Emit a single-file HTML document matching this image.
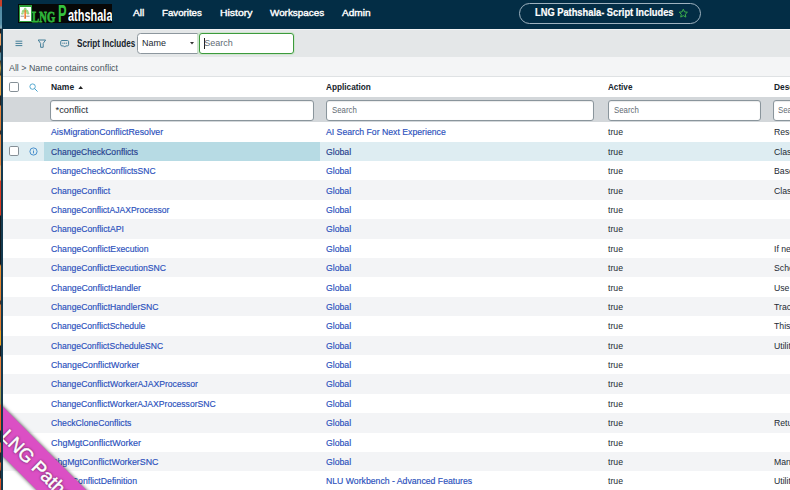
<!DOCTYPE html><html><head><meta charset="utf-8"><title>LNG Pathshala- Script Includes</title><style>
*{box-sizing:border-box;margin:0;padding:0}
html,body{width:790px;height:490px;overflow:hidden;background:#fff}
body{font-family:"Liberation Sans",sans-serif;font-size:8.7px;color:#1d2a33;position:relative}
.abs{position:absolute}
#strip{left:0;top:0;width:1.5px;height:490px;background:linear-gradient(to bottom,#c8402a 0px,#c8402a 6px,#4f8aa3 7px,#5b93ab 24px,#8ab0c0 28px,#1a1a1c 29.5px,#1a1a1c 33px,#f0a868 34px,#eea060 45px,#2a2622 46px,#2a2622 52px,#5a8a9a 53px,#5a8a9a 60px,#3a3020 61px,#c8a040 68px,#3a3020 75px,#e8a040 76px,#e8a040 95px,#2a2420 96px,#2a2420 105px,#e8853c 106px,#d87a34 130px,#3a2a20 131px,#3a2a20 134px,#e8853c 135px,#e8853c 165px,#f0b070 166px,#f0b070 180px,#d83820 181px,#d83820 215px,#15181c 216px,#15181c 264px,#e89030 266px,#e07c30 300px,#4a3020 301px,#4a3020 304px,#e07c30 305px,#e07c30 330px,#f0a020 331px,#f0a020 345px,#1a1a1c 346px,#1a1a1c 356px,#e8803c 357px,#e8803c 386px,#a89a50 387px,#a89a50 404px,#f05a20 405px,#f05a20 430px,#2a2020 431px,#2a2020 442px,#e86030 443px,#e86030 452px,#2a2020 453px,#3a2420 462px,#e8602c 463px,#c04a24 470px,#2a2020 471px,#2a2020 478px,#e85a28 479px,#d04820 490px)}
#sline{left:1.4px;top:29.3px;width:1.5px;height:461px;background:#143a50}
#strip2{left:0;top:400px;width:1.5px;height:90px;background:linear-gradient(to bottom,#c8402a 0px,#c8402a 6px,#4f8aa3 7px,#5b93ab 24px,#8ab0c0 28px,#1a1a1c 29.5px,#1a1a1c 33px,#f0a868 34px,#eea060 45px,#2a2622 46px,#2a2622 52px,#5a8a9a 53px,#5a8a9a 60px,#3a3020 61px,#c8a040 68px,#3a3020 75px,#e8a040 76px,#e8a040 95px,#2a2420 96px,#2a2420 105px,#e8853c 106px,#d87a34 130px,#3a2a20 131px,#3a2a20 134px,#e8853c 135px,#e8853c 165px,#f0b070 166px,#f0b070 180px,#d83820 181px,#d83820 215px,#15181c 216px,#15181c 264px,#e89030 266px,#e07c30 300px,#4a3020 301px,#4a3020 304px,#e07c30 305px,#e07c30 330px,#f0a020 331px,#f0a020 345px,#1a1a1c 346px,#1a1a1c 356px,#e8803c 357px,#e8803c 386px,#a89a50 387px,#a89a50 404px,#f05a20 405px,#f05a20 430px,#2a2020 431px,#2a2020 442px,#e86030 443px,#e86030 452px,#2a2020 453px,#3a2420 462px,#e8602c 463px,#c04a24 470px,#2a2020 471px,#2a2020 478px,#e85a28 479px,#d04820 490px);background-size:2.2px 490px;background-position:0 -400px}
#sline2{left:1.4px;top:400px;width:1.5px;height:90px;background:#143a50}
#hdr{left:1.5px;top:0;width:788.5px;height:29.3px;background:#032d45}
#hline{left:3px;top:29.3px;width:787px;height:.8px;background:#f2f4f5}
#tool{left:3px;top:30.1px;width:787px;height:27.3px;background:#e4e7e8}
#crumb{left:3px;top:57.4px;width:787px;height:19px;background:#f4f5f6}
#thead{left:3px;top:76.3px;width:787px;height:21px;background:#fff;border-top:1px solid #dfe2e4}
#filt{left:3px;top:97.3px;width:787px;height:25px;background:#d3d7da}
.nav{color:#fff;font-size:9.9px;top:7.05px;white-space:nowrap;line-height:12px;transform-origin:0 50%;-webkit-text-stroke:0.4px #fff}
.row{left:3px;width:787px;height:19.39px}
.row.g{background:#f3f4f6}
.row.h{background:#deedf2}
.cell{position:absolute;white-space:nowrap;line-height:19.39px;height:19.39px;top:1.1px}
.lnk{color:#2a50bc;-webkit-text-stroke:.15px #2a50bc}
.h .lnk{color:#26408e;-webkit-text-stroke:.15px #26408e}
.b{font-weight:bold}
.inp{position:absolute;background:#fff;border:1px solid #8a959c;border-radius:3px;height:20.8px;top:2.5px;font-size:9.3px;line-height:19px;padding-left:4.6px;color:#5a666e;white-space:nowrap;overflow:hidden;box-shadow:inset 0 0.5px 1px rgba(0,0,0,.15)}
.cb{position:absolute;width:10.6px;height:10.6px;border:1px solid #858f96;border-radius:1.8px;background:#fff}
</style></head><body>
<div id="strip" class="abs"></div><div id="sline" class="abs"></div>
<div id="hdr" class="abs"></div><div id="hline" class="abs"></div>
<div class="abs" style="left:17.9px;top:4.1px;width:94.2px;height:19.1px;background:#070707;overflow:hidden">
<div class="abs" style="left:1.4px;top:1.1px;width:12.9px;height:16.9px;border:1.3px solid #2f9e3a;border-top-width:2px;background:#fff">
<svg class="abs" style="left:0;top:0" width="10.3" height="13.6" viewBox="0 0 103 136"><g fill="#9bd884"><circle cx="52" cy="22" r="14"/><circle cx="34" cy="42" r="15"/><circle cx="70" cy="42" r="15"/><circle cx="24" cy="64" r="12"/><circle cx="80" cy="62" r="12"/><circle cx="52" cy="40" r="16"/></g><path d="M46 30h12l3 88H43z" fill="#f07a2a"/><path d="M40 62l10 14M66 58L56 74" stroke="#f39a4a" stroke-width="6"/><rect x="6" y="88" width="34" height="7" fill="#666"/><rect x="62" y="88" width="34" height="7" fill="#666"/></svg>
</div>
<span class="abs" style="left:14.6px;top:4.6px;font-family:'Liberation Serif',serif;font-weight:bold;font-size:15.4px;line-height:15px;color:#2fb53a;transform:scaleX(.685);transform-origin:0 0;letter-spacing:.3px;-webkit-text-stroke:.8px #2fb53a">LNG</span>
<span class="abs" style="left:40.2px;top:-2.15px;font-weight:bold;font-size:23px;line-height:24px;color:#35c13f;transform:scaleX(.56);transform-origin:0 0">P</span>
<span class="abs" style="left:50.2px;top:4.1px;font-weight:bold;font-size:15.9px;line-height:16px;color:#fff;transform:scaleX(.69);transform-origin:0 0">athshala</span>
</div>
<span class="abs nav" id="nav0" style="transform:scaleX(1.0378);left:133px">All</span>
<span class="abs nav" id="nav1" style="transform:scaleX(0.9801);left:162.2px">Favorites</span>
<span class="abs nav" id="nav2" style="transform:scaleX(1.0574);left:219.8px">History</span>
<span class="abs nav" id="nav3" style="transform:scaleX(0.9990);left:270.3px">Workspaces</span>
<span class="abs nav" id="nav4" style="transform:scaleX(1.0214);left:341.9px">Admin</span>
<div class="abs" style="left:519.3px;top:3.2px;width:182px;height:20.6px;border:1px solid #9fb3c0;border-radius:11px"></div>
<span class="abs b" id="ptitle" style="transform:scaleX(0.9129);left:535.3px;top:7px;color:#fff;-webkit-text-stroke:.2px #fff;font-size:10.2px;line-height:12px;white-space:nowrap;transform-origin:0 50%">LNG Pathshala- Script Includes</span>
<svg class="abs" style="left:678.2px;top:8.2px" width="10.6" height="10.6" viewBox="0 0 24 24"><path d="M12 2.8l2.8 6 6.5.8-4.8 4.5 1.3 6.5L12 17.3l-5.8 3.3 1.3-6.5L2.7 9.6l6.5-.8z" fill="none" stroke="#3fb54a" stroke-width="2.2" stroke-linejoin="round"/></svg>
<div id="tool" class="abs"></div>
<svg class="abs" style="left:0;top:30px" width="80" height="28" viewBox="0 30 80 28"><g fill="none" stroke="#447f99">
<path d="M15.5 41.2h6.8M15.5 43.4h6.8M15.5 45.6h6.8" stroke-width="1"/>
<path d="M38.2 40h7.4L43.2 43.4v3.9h-2.6v-3.9z" stroke-width="1" stroke-linejoin="round"/>
<path d="M61.9 40.5h5.5a1.2 1.2 0 0 1 1.2 1.2v3a1.2 1.2 0 0 1-1.2 1.2h-1.7l-1.05 1.2-1.05-1.2h-1.7a1.2 1.2 0 0 1-1.2-1.2v-3a1.2 1.2 0 0 1 1.2-1.2z" stroke-width="1"/></g>
<g fill="#447f99"><circle cx="62.9" cy="43.2" r=".6"/><circle cx="64.65" cy="43.2" r=".6"/><circle cx="66.4" cy="43.2" r=".6"/></g></svg>
<span class="abs b" id="stitle" style="transform:scaleX(0.8057);left:77.3px;top:37.5px;font-size:10.1px;line-height:12px;color:#16232b;white-space:nowrap;transform-origin:0 50%">Script Includes</span>
<div class="abs" style="left:137.4px;top:33.2px;width:61px;height:20.4px;background:#fff;border:1px solid #8d979e;border-radius:3.5px 0 0 3.5px"></div>
<span class="abs" style="left:142px;top:37.4px;font-size:9px;line-height:12px;color:#1d2a33">Name</span>
<svg class="abs" style="left:189.6px;top:42px" width="4" height="3" viewBox="0 0 4 3"><path d="M0 0h4L2 2.6z" fill="#333"/></svg>
<div class="abs" style="left:197.4px;top:32.2px;width:98px;height:22.4px;border-radius:4px;background:#cfe5cf"></div>
<div class="abs" style="left:198.6px;top:33.2px;width:95.6px;height:20.4px;background:#fff;border:1.2px solid #3c9a3c;border-radius:3px"></div>
<div class="abs" style="left:203.6px;top:38px;width:.8px;height:11px;background:#222"></div>
<span class="abs" style="left:204.2px;top:37.4px;font-size:9px;line-height:12px;color:#5f6b73">Search</span>
<div id="crumb" class="abs"></div>
<span class="abs" id="crumbt" style="transform:scaleX(0.9976);left:9px;top:61.5px;font-size:8.9px;line-height:12px;color:#4a565e;white-space:nowrap;transform-origin:0 50%">All &gt; Name contains conflict</span>
<div id="thead" class="abs"></div>
<div class="cb" style="left:8.8px;top:81.8px"></div>
<svg class="abs" style="left:28.6px;top:82.6px" width="9" height="9" viewBox="0 0 9 9"><circle cx="3.6" cy="3.6" r="2.7" fill="none" stroke="#46a0cc" stroke-width=".9"/><path d="M5.6 5.6L8.3 8.3" stroke="#46a0cc" stroke-width="1" stroke-linecap="round"/></svg>
<span class="abs b" id="h0" style="transform:scaleX(0.8837);left:50.9px;top:80.95px;font-size:9.6px;line-height:12px;color:#16232b;white-space:nowrap;transform-origin:0 50%">Name</span>
<span class="abs b" id="h1" style="transform:scaleX(0.8596);left:326px;top:80.95px;font-size:9.6px;line-height:12px;color:#16232b;white-space:nowrap;transform-origin:0 50%">Application</span>
<span class="abs b" id="h2" style="transform:scaleX(0.8473);left:608.2px;top:80.95px;font-size:9.6px;line-height:12px;color:#16232b;white-space:nowrap;transform-origin:0 50%">Active</span>
<span class="abs b" id="h3" style="transform:scaleX(0.8715);left:774px;top:80.95px;font-size:9.6px;line-height:12px;color:#16232b;white-space:nowrap;transform-origin:0 50%">Description</span>
<svg class="abs" style="left:77.8px;top:85.8px" width="5.4" height="3.6" viewBox="0 0 5.4 3.6"><path d="M0 3.4h5.4L2.7 0z" fill="#222"/></svg>
<div id="filt" class="abs">
<div class="inp" style="left:47px;width:263.6px;color:#1d2a33">*conflict</div>
<div class="inp" style="left:323px;width:268.4px;color:#5f6b73;font-size:8.8px"><span id="ph326" style="transform:scaleX(0.8897);display:inline-block;transform-origin:0 50%">Search</span></div>
<div class="inp" style="left:605px;width:153.4px;color:#5f6b73;font-size:8.8px"><span id="ph608" style="transform:scaleX(0.8897);display:inline-block;transform-origin:0 50%">Search</span></div>
<div class="inp" style="left:769.8px;width:60px;color:#5f6b73;font-size:8.8px"><span id="ph772" style="transform:scaleX(0.8897);display:inline-block;transform-origin:0 50%">Search</span></div>
</div>
<div class="row abs" style="top:122.30px">
<span class="cell lnk" id="n0" style="transform:scaleX(1.0095);transform-origin:0 50%;left:47.8px">AisMigrationConflictResolver</span>
<span class="cell lnk" id="a0" style="left:323px">AI Search For Next Experience</span>
<span class="cell" style="left:605px">true</span>
<span class="cell" style="left:771px">Resolves</span>
</div>
<div class="row abs h" style="top:141.69px">
<div class="abs" style="left:41.4px;top:0;width:275.6px;height:19.39px;background:#b7dbe4"></div>
<div class="cb" style="left:5.8px;top:4.2px"></div>
<svg class="abs" style="left:25.6px;top:5.2px" width="9" height="9" viewBox="0 0 9 9"><circle cx="4.5" cy="4.5" r="3.6" fill="none" stroke="#3a86c8" stroke-width=".9"/><path d="M4.5 4v2.4" stroke="#3a86c8" stroke-width=".9"/><circle cx="4.5" cy="2.9" r=".5" fill="#3a86c8"/></svg>
<span class="cell lnk" id="n1" style="transform:scaleX(0.9844);transform-origin:0 50%;left:47.8px">ChangeCheckConflicts</span>
<span class="cell lnk" id="a1" style="left:323px">Global</span>
<span class="cell" style="left:605px">true</span>
<span class="cell" style="left:771px">Class</span>
</div>
<div class="row abs" style="top:161.08px">
<span class="cell lnk" id="n2" style="transform:scaleX(0.9801);transform-origin:0 50%;left:47.8px">ChangeCheckConflictsSNC</span>
<span class="cell lnk" id="a2" style="left:323px">Global</span>
<span class="cell" style="left:605px">true</span>
<span class="cell" style="left:771px">Base</span>
</div>
<div class="row abs g" style="top:180.47px">
<span class="cell lnk" id="n3" style="transform:scaleX(0.9948);transform-origin:0 50%;left:47.8px">ChangeConflict</span>
<span class="cell lnk" id="a3" style="left:323px">Global</span>
<span class="cell" style="left:605px">true</span>
<span class="cell" style="left:771px">Class</span>
</div>
<div class="row abs" style="top:199.86px">
<span class="cell lnk" id="n4" style="transform:scaleX(0.9847);transform-origin:0 50%;left:47.8px">ChangeConflictAJAXProcessor</span>
<span class="cell lnk" id="a4" style="left:323px">Global</span>
<span class="cell" style="left:605px">true</span>
</div>
<div class="row abs g" style="top:219.25px">
<span class="cell lnk" id="n5" style="transform:scaleX(0.9917);transform-origin:0 50%;left:47.8px">ChangeConflictAPI</span>
<span class="cell lnk" id="a5" style="left:323px">Global</span>
<span class="cell" style="left:605px">true</span>
</div>
<div class="row abs" style="top:238.64px">
<span class="cell lnk" id="n6" style="transform:scaleX(0.9994);transform-origin:0 50%;left:47.8px">ChangeConflictExecution</span>
<span class="cell lnk" id="a6" style="left:323px">Global</span>
<span class="cell" style="left:605px">true</span>
<span class="cell" style="left:771px">If needed</span>
</div>
<div class="row abs g" style="top:258.03px">
<span class="cell lnk" id="n7" style="transform:scaleX(0.9922);transform-origin:0 50%;left:47.8px">ChangeConflictExecutionSNC</span>
<span class="cell lnk" id="a7" style="left:323px">Global</span>
<span class="cell" style="left:605px">true</span>
<span class="cell" style="left:771px">Schedule</span>
</div>
<div class="row abs" style="top:277.42px">
<span class="cell lnk" id="n8" style="transform:scaleX(1.0019);transform-origin:0 50%;left:47.8px">ChangeConflictHandler</span>
<span class="cell lnk" id="a8" style="left:323px">Global</span>
<span class="cell" style="left:605px">true</span>
<span class="cell" style="left:771px">Use this</span>
</div>
<div class="row abs g" style="top:296.81px">
<span class="cell lnk" id="n9" style="transform:scaleX(0.9938);transform-origin:0 50%;left:47.8px">ChangeConflictHandlerSNC</span>
<span class="cell lnk" id="a9" style="left:323px">Global</span>
<span class="cell" style="left:605px">true</span>
<span class="cell" style="left:771px">Track</span>
</div>
<div class="row abs" style="top:316.20px">
<span class="cell lnk" id="n10" style="transform:scaleX(0.9870);transform-origin:0 50%;left:47.8px">ChangeConflictSchedule</span>
<span class="cell lnk" id="a10" style="left:323px">Global</span>
<span class="cell" style="left:605px">true</span>
<span class="cell" style="left:771px">This</span>
</div>
<div class="row abs g" style="top:335.59px">
<span class="cell lnk" id="n11" style="transform:scaleX(0.9836);transform-origin:0 50%;left:47.8px">ChangeConflictScheduleSNC</span>
<span class="cell lnk" id="a11" style="left:323px">Global</span>
<span class="cell" style="left:605px">true</span>
<span class="cell" style="left:771px">Utility</span>
</div>
<div class="row abs" style="top:354.98px">
<span class="cell lnk" id="n12" style="transform:scaleX(1.0109);transform-origin:0 50%;left:47.8px">ChangeConflictWorker</span>
<span class="cell lnk" id="a12" style="left:323px">Global</span>
<span class="cell" style="left:605px">true</span>
</div>
<div class="row abs g" style="top:374.37px">
<span class="cell lnk" id="n13" style="transform:scaleX(0.9927);transform-origin:0 50%;left:47.8px">ChangeConflictWorkerAJAXProcessor</span>
<span class="cell lnk" id="a13" style="left:323px">Global</span>
<span class="cell" style="left:605px">true</span>
</div>
<div class="row abs" style="top:393.76px">
<span class="cell lnk" id="n14" style="transform:scaleX(0.9897);transform-origin:0 50%;left:47.8px">ChangeConflictWorkerAJAXProcessorSNC</span>
<span class="cell lnk" id="a14" style="left:323px">Global</span>
<span class="cell" style="left:605px">true</span>
</div>
<div class="row abs g" style="top:413.15px">
<span class="cell lnk" id="n15" style="transform:scaleX(0.9970);transform-origin:0 50%;left:47.8px">CheckCloneConflicts</span>
<span class="cell lnk" id="a15" style="left:323px">Global</span>
<span class="cell" style="left:605px">true</span>
<span class="cell" style="left:771px">Return</span>
</div>
<div class="row abs" style="top:432.54px">
<span class="cell lnk" id="n16" style="transform:scaleX(1.0306);transform-origin:0 50%;left:47.8px">ChgMgtConflictWorker</span>
<span class="cell lnk" id="a16" style="left:323px">Global</span>
<span class="cell" style="left:605px">true</span>
</div>
<div class="row abs g" style="top:451.93px">
<span class="cell lnk" id="n17" style="transform:scaleX(1.0182);transform-origin:0 50%;left:47.8px">ChgMgtConflictWorkerSNC</span>
<span class="cell lnk" id="a17" style="left:323px">Global</span>
<span class="cell" style="left:605px">true</span>
<span class="cell" style="left:771px">Manages</span>
</div>
<div class="row abs" style="top:471.32px">
<span class="cell lnk" id="n18" style="right:653px">CLConflictDefinition</span>
<span class="cell lnk" id="a18" style="left:323px">NLU Workbench - Advanced Features</span>
<span class="cell" style="left:605px">true</span>
<span class="cell" style="left:771px">Utility</span>
</div>
<div class="abs" id="ribbon" style="left:-75px;top:466.2px;width:260px;height:34.6px;background:#db4fc4;transform:rotate(45deg);transform-origin:50% 50%;box-shadow:0 0 4px rgba(0,0,0,.75);color:#fff;font-size:18.8px;line-height:34.6px;white-space:nowrap;-webkit-text-stroke:.5px #fff;text-shadow:0 0 2.5px rgba(0,0,0,.9)"><span id="rtext" style="position:absolute;left:58.4px;top:1px">LNG Pathshala</span></div>
<div id="strip2" class="abs"></div><div id="sline2" class="abs"></div>
</body></html>
